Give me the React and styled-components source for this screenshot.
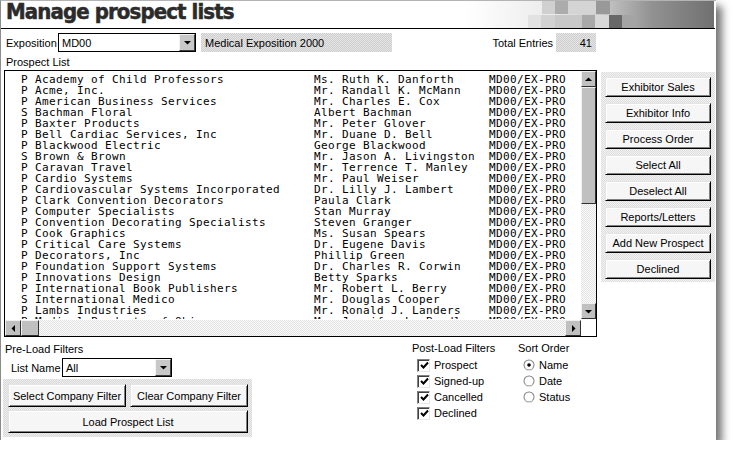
import React from 'react';
import styled, { createGlobalStyle } from 'styled-components';

const GlobalStyle = createGlobalStyle`
    html, body {
        margin: 0;
        padding: 0;
        background: #ffffff;
    }
    body {
        font-family: "Liberation Sans", Arial, sans-serif;
        font-size: 11px;
        color: #000;
    }
`;

const prospects = [
    ['P Academy of Child Professors', 'Ms. Ruth K. Danforth'],
    ['P Acme, Inc.', 'Mr. Randall K. McMann'],
    ['P American Business Services', 'Mr. Charles E. Cox'],
    ['S Bachman Floral', 'Albert Bachman'],
    ['P Baxter Products', 'Mr. Peter Glover'],
    ['P Bell Cardiac Services, Inc', 'Mr. Duane D. Bell'],
    ['P Blackwood Electric', 'George Blackwood'],
    ['S Brown & Brown', 'Mr. Jason A. Livingston'],
    ['P Caravan Travel', 'Mr. Terrence T. Manley'],
    ['P Cardio Systems', 'Mr. Paul Weiser'],
    ['P Cardiovascular Systems Incorporated', 'Dr. Lilly J. Lambert'],
    ['P Clark Convention Decorators', 'Paula Clark'],
    ['P Computer Specialists', 'Stan Murray'],
    ['P Convention Decorating Specialists', 'Steven Granger'],
    ['P Cook Graphics', 'Ms. Susan Spears'],
    ['P Critical Care Systems', 'Dr. Eugene Davis'],
    ['P Decorators, Inc', 'Phillip Green'],
    ['P Foundation Support Systems', 'Dr. Charles R. Corwin'],
    ['P Innovations Design', 'Betty Sparks'],
    ['P International Book Publishers', 'Mr. Robert L. Berry'],
    ['S International Medico', 'Mr. Douglas Cooper'],
    ['P Lambs Industries', 'Mr. Ronald J. Landers'],
    ['P Medical Products of Ohio', 'Ms. Jennifer L. Bradley'],
];

const actions = [
    'Exhibitor Sales',
    'Exhibitor Info',
    'Process Order',
    'Select All',
    'Deselect All',
    'Reports/Letters',
    'Add New Prospect',
    'Declined',
];

const postFilters = ['Prospect', 'Signed-up', 'Cancelled', 'Declined'];
const sortOrders = ['Name', 'Date', 'Status'];

const HeaderArt = () => (
    <svg width="250" height="27" viewBox="0 0 250 27">
        <defs>
            <linearGradient id="fade" x1="0" x2="1" y1="0" y2="0">
                <stop offset="0" stopColor="#ffffff" />
                <stop offset="0.35" stopColor="#ebebeb" />
                <stop offset="0.55" stopColor="#c8c8c8" />
                <stop offset="0.75" stopColor="#929292" />
                <stop offset="1" stopColor="#707070" />
            </linearGradient>
        </defs>
        <rect x="0" y="0" width="249" height="27" fill="url(#fade)" />
        <rect x="77" y="0" width="13" height="13" fill="#d0d0d0" />
        <rect x="90" y="0" width="13" height="13" fill="#acacac" />
        <rect x="103" y="0" width="28" height="13" fill="#d4d4d4" />
        <rect x="131" y="0" width="14" height="13" fill="#999999" />
        <rect x="63" y="14" width="13" height="13" fill="#e2e2e2" />
        <rect x="76" y="14" width="14" height="13" fill="#d2d2d2" />
        <rect x="90" y="14" width="27" height="13" fill="#c8c8c8" />
        <rect x="117" y="14" width="13" height="13" fill="#a9a9a9" />
        <rect x="130" y="14" width="14" height="13" fill="#d8d8d8" />
        <rect x="144" y="14" width="13" height="13" fill="#686868" />
        <rect x="157" y="14" width="14" height="13" fill="#a4a4a4" />
    </svg>
);

const Arrow = ({ dir }) => {
    const shapes = {
        up: '1,5 8,5 4.5,1.5',
        down: '1,2 8,2 4.5,5.5',
        left: '5,1 5,8 1.5,4.5',
        right: '2,1 2,8 5.5,4.5',
    };
    const vertical = dir === 'up' || dir === 'down';
    return (
        <svg width={vertical ? 9 : 7} height={vertical ? 7 : 9}>
            <polygon points={shapes[dir]} fill="#000" />
        </svg>
    );
};

const CheckMark = () => (
    <svg width="9" height="9" viewBox="0 0 9 9">
        <path d="M1 4 L3.5 6.5 L8 1.5" stroke="#000" strokeWidth="2" fill="none" />
    </svg>
);

const RadioMark = ({ on }) => (
    <svg width="12" height="12" viewBox="0 0 12 12">
        <circle cx="6" cy="6" r="5.5" fill="#808080" />
        <circle cx="6" cy="6" r="4.5" fill="#ffffff" />
        <path d="M1.8 9.5 A5.2 5.2 0 0 0 10.2 9.5" stroke="#e0e0e0" fill="none" />
        {on && <circle cx="6" cy="6" r="1.8" fill="#000" />}
    </svg>
);

const App = () => {
    return (
        <>
            <GlobalStyle />
            <Window>
                <Header>
                    <Title>Manage prospect lists</Title>
                    <HeaderArt />
                </Header>

                <TopRow>
                    <Label width={51}>Exposition</Label>
                    <Combo width={138}>
                        <span>MD00</span>
                        <DropButton><Arrow dir="down" /></DropButton>
                    </Combo>
                    <ReadField width={191}>Medical Exposition 2000</ReadField>
                    <TotalLabel>Total Entries</TotalLabel>
                    <ReadField width={40} align="right">41</ReadField>
                </TopRow>

                <SectionLabel>Prospect List</SectionLabel>

                <MainRow>
                    <ListBox>
                        <ListBody>
                            {prospects.map(([company, contact]) => (
                                <ListRow key={company}>
                                    <span>{company}</span>
                                    <span>{contact}</span>
                                    <span>MD00/EX-PRO</span>
                                </ListRow>
                            ))}
                        </ListBody>
                        <VScroll>
                            <ScrollButton><Arrow dir="up" /></ScrollButton>
                            <Thumb size={117} />
                            <Track />
                            <ScrollButton><Arrow dir="down" /></ScrollButton>
                        </VScroll>
                        <HScroll>
                            <ScrollButton><Arrow dir="left" /></ScrollButton>
                            <Thumb size={18} />
                            <Track />
                            <ScrollButton><Arrow dir="right" /></ScrollButton>
                        </HScroll>
                        <Corner />
                    </ListBox>

                    <ActionPanel>
                        {actions.map((a) => (
                            <Button key={a} height={20}>{a}</Button>
                        ))}
                    </ActionPanel>
                </MainRow>

                <BottomRow>
                    <PreLoad>
                        <GroupTitle>Pre-Load Filters</GroupTitle>
                        <ListNameRow>
                            <Label width={50}>List Name</Label>
                            <Combo width={110}>
                                <span>All</span>
                                <DropButton><Arrow dir="down" /></DropButton>
                            </Combo>
                        </ListNameRow>
                        <FilterPanel>
                            <Button height={23}>Select Company Filter</Button>
                            <Button height={23}>Clear Company Filter</Button>
                            <Button height={23} wide>Load Prospect List</Button>
                        </FilterPanel>
                    </PreLoad>

                    <OptionGroup width={106}>
                        <GroupTitle>Post-Load Filters</GroupTitle>
                        {postFilters.map((f) => (
                            <Option key={f}>
                                <CheckBox><CheckMark /></CheckBox>
                                {f}
                            </Option>
                        ))}
                    </OptionGroup>

                    <OptionGroup width={80}>
                        <GroupTitle>Sort Order</GroupTitle>
                        {sortOrders.map((s, i) => (
                            <Option key={s}>
                                <RadioMark on={i === 0} />
                                {s}
                            </Option>
                        ))}
                    </OptionGroup>
                </BottomRow>
            </Window>
        </>
    );
};

const dither = (a, b) => `repeating-conic-gradient(${a} 0 25%, ${b} 0 50%) 0 0 / 2px 2px`;

const Window = styled.div`
    box-sizing: border-box;
    width: 716px;
    height: 440px;
    background: #ffffff;
    border-left: 1px solid #8c8c8c;
    border-top: 1px solid #b4b4b4;
    box-shadow: 6px 6px 8px rgba(0, 0, 0, 0.55);
    display: flex;
    flex-direction: column;
`;

const Header = styled.div`
    height: 27px;
    border-bottom: 1px solid #000;
    margin-right: 1px;
    display: flex;
    justify-content: space-between;
    align-items: flex-start;
    svg {
        display: block;
    }
`;

const Title = styled.h1`
    margin: 0 0 0 5px;
    font-family: "DejaVu Sans Condensed", "DejaVu Sans", sans-serif;
    font-stretch: condensed;
    font-weight: bold;
    font-size: 22px;
    line-height: 22px;
    letter-spacing: -0.9px;
    color: #2b2b2b;
    -webkit-text-stroke: 0.5px #2b2b2b;
`;

const TopRow = styled.div`
    width: 590px;
    margin-top: 4px;
    padding-left: 5px;
    height: 19px;
    display: flex;
    align-items: center;
`;

const Label = styled.span`
    width: ${(p) => p.width}px;
    flex: none;
    white-space: nowrap;
`;

const Combo = styled.div`
    box-sizing: border-box;
    width: ${(p) => p.width}px;
    height: 19px;
    border: 1px solid #000;
    background: #fff;
    display: flex;
    align-items: center;
    justify-content: space-between;
    padding-left: 3px;
    margin-left: 1px;
`;

const DropButton = styled.div`
    box-sizing: border-box;
    width: 16px;
    height: 17px;
    background: #c8c8c8;
    border: 1px solid;
    border-color: #f4f4f4 #404040 #404040 #f4f4f4;
    display: flex;
    align-items: center;
    justify-content: center;
`;

const ReadField = styled.div`
    box-sizing: border-box;
    width: ${(p) => p.width}px;
    height: 19px;
    margin-left: ${(p) => (p.align === 'right' ? 3 : 5)}px;
    padding: 0 4px;
    background: ${dither('#cdcdcd', '#e6e6e6')};
    display: flex;
    align-items: center;
    justify-content: ${(p) => (p.align === 'right' ? 'flex-end' : 'flex-start')};
    white-space: nowrap;
`;

const TotalLabel = styled.span`
    margin-left: auto;
    white-space: nowrap;
`;

const SectionLabel = styled.div`
    margin: 4px 0 0 5px;
    height: 14px;
    line-height: 13px;
`;

const MainRow = styled.div`
    display: flex;
    align-items: flex-start;
    padding-left: 3px;
`;

const ListBox = styled.div`
    box-sizing: border-box;
    width: 593px;
    height: 267px;
    border: 1px solid #000;
    display: grid;
    grid-template-columns: 576px 15px;
    grid-template-rows: 248px 17px;
    flex: none;
`;

const ListBody = styled.div`
    overflow: hidden;
    padding: 3px 0 0 16px;
    font-family: "DejaVu Sans Mono", monospace;
    font-size: 11px;
    letter-spacing: 0.38px;
    color: #000;
`;

const ListRow = styled.div`
    display: grid;
    grid-template-columns: 293px 175px auto;
    height: 11px;
    line-height: 11px;
    white-space: pre;
`;

const VScroll = styled.div`
    display: flex;
    flex-direction: column;
`;

const HScroll = styled.div`
    display: flex;
    padding-top: 1px;
`;

const ScrollButton = styled.div`
    box-sizing: border-box;
    flex: none;
    width: 15px;
    height: 16px;
    background: #c0c0c0;
    border: 1px solid;
    border-color: #f0f0f0 #303030 #303030 #f0f0f0;
    display: flex;
    align-items: center;
    justify-content: center;
    ${HScroll} & {
        width: 16px;
    }
`;

const Thumb = styled.div`
    box-sizing: border-box;
    flex: none;
    height: ${(p) => p.size}px;
    background: #c0c0c0;
    border: 1px solid;
    border-color: #f0f0f0 #303030 #303030 #f0f0f0;
    ${HScroll} & {
        height: 16px;
        width: ${(p) => p.size}px;
    }
`;

const Track = styled.div`
    flex: 1;
    background: ${dither('#e2e2e2', '#fbfbfb')};
`;

const Corner = styled.div`
    background: #fff;
`;

const ActionPanel = styled.div`
    box-sizing: border-box;
    margin: 2px 0 0 4px;
    width: 114px;
    height: 210px;
    padding: 5px 0 0 4px;
    background: ${dither('#dedede', '#f2f2f2')};
    display: flex;
    flex-direction: column;
    gap: 6px;
`;

const Button = styled.div`
    box-sizing: border-box;
    width: ${(p) => (p.wide ? '240px' : p.height === 23 ? '118px' : '106px')};
    height: ${(p) => p.height}px;
    background: #f6f6f6;
    border: 1px solid;
    border-color: #e4e4e4 #000 #000 #e4e4e4;
    box-shadow: inset 1px 1px #ffffff, inset -1px -1px #808080;
    display: flex;
    align-items: center;
    justify-content: center;
    white-space: nowrap;
`;

const BottomRow = styled.div`
    display: flex;
    align-items: flex-start;
    padding-left: 2px;
    margin-top: 6px;
`;

const PreLoad = styled.div`
    width: 249px;
    display: flex;
    flex-direction: column;
`;

const GroupTitle = styled.div`
    height: 13px;
    line-height: 13px;
    padding-left: 2px;
    white-space: nowrap;
`;

const ListNameRow = styled.div`
    margin-top: 2px;
    padding-left: 8px;
    display: flex;
    align-items: center;
    height: 19px;
`;

const FilterPanel = styled.div`
    box-sizing: border-box;
    margin-top: 2px;
    height: 58px;
    padding: 5px 0 0 5px;
    background: ${dither('#d8d8d8', '#efefef')};
    display: flex;
    flex-wrap: wrap;
    align-content: flex-start;
    column-gap: 4px;
    row-gap: 3px;
`;

const OptionGroup = styled.div`
    width: ${(p) => p.width}px;
    margin-left: ${(p) => (p.width === 106 ? 158 : 0)}px;
    margin-top: -1px;
    display: flex;
    flex-direction: column;
    ${GroupTitle} {
        margin-bottom: 2px;
    }
`;

const Option = styled.div`
    height: 16px;
    display: flex;
    align-items: center;
    gap: 4px;
    padding-left: 7px;
    white-space: nowrap;
    svg {
        flex: none;
    }
`;

const CheckBox = styled.span`
    box-sizing: border-box;
    width: 13px;
    height: 13px;
    background: #fff;
    border: 1px solid;
    border-color: #808080 #e8e8e8 #e8e8e8 #808080;
    box-shadow: inset 1px 1px #404040;
    display: flex;
    align-items: center;
    justify-content: center;
    padding: 1px 0 0 1px;
`;

export default App;
